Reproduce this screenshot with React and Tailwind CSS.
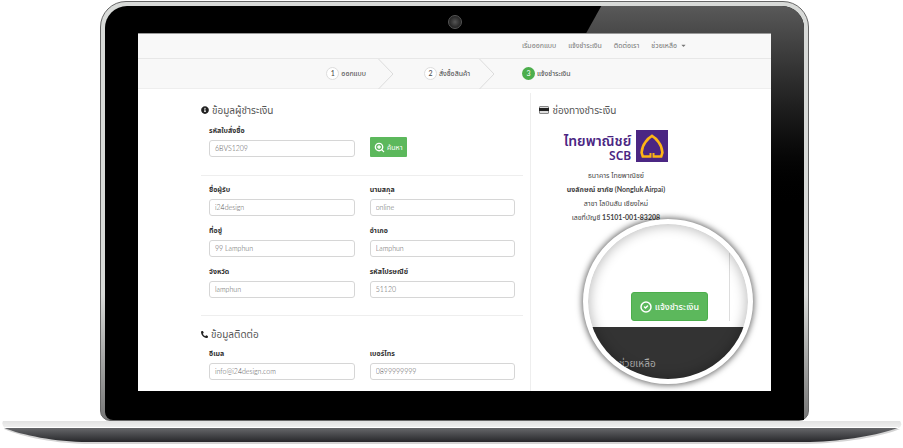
import React, { useState } from "react";
import { FaInfoCircle, FaPhoneAlt, FaCaretDown } from "react-icons/fa";
import { ZoomIn, CircleCheck } from "lucide-react";

const navLinks = ["เริ่มออกแบบ", "แจ้งชำระเงิน", "ติดต่อเรา"];

const Field = ({ id, label, value, onChange }) => (
  <div className="min-w-0">
    <label htmlFor={id} className="block text-[7px] leading-[12px] font-bold text-[#333]">
      {label}
    </label>
    <input
      id={id}
      type="text"
      value={value}
      onChange={(e) => onChange(id, e.target.value)}
      className="mt-[4px] block h-[17px] w-full rounded-[3px] border border-[#d6d6d6] bg-white px-[5px] pb-[1px] text-[7px] font-light text-[#555] outline-none"
    />
  </div>
);

const Step = ({ number, label, active }) => (
  <li className="flex items-center gap-[2px] text-[7px] whitespace-nowrap text-[#444]">
    <span
      className={
        active
          ? "flex h-[13px] w-[13px] items-center justify-center rounded-full bg-[#4cae4c] text-white"
          : "flex h-[13px] w-[13px] items-center justify-center rounded-full border border-[#ddd] bg-white"
      }
    >
      {number}
    </span>
    {label}
  </li>
);

const StepArrow = () => (
  <li aria-hidden="true" className="h-full">
    <svg width="16" height="30" viewBox="0 0 16 30" fill="none" stroke="#dcdcdc">
      <path d="M0.5 0L15 15L0.5 30" />
    </svg>
  </li>
);

const CardIcon = () => (
  <svg width="10" height="8" viewBox="0 0 10 8">
    <rect x="0.5" y="0.5" width="9" height="7" rx="0.5" fill="#ddd" stroke="#888" />
    <rect x="0" y="2" width="10" height="3" fill="#222" />
  </svg>
);

const BankLogo = () => (
  <div className="flex items-start justify-center gap-[5px] text-[#4b2683]">
    <div className="text-right font-['Noto_Sans','Noto_Sans_Thai',sans-serif]">
      <p className="text-[14px] leading-[21px] font-semibold">ไทยพาณิชย์</p>
      <p className="text-[12px] leading-[10px] font-semibold">SCB</p>
    </div>
    <svg width="32" height="32" viewBox="0 0 32 32">
      <rect width="32" height="32" fill="#4b2683" />
      <path
        d="M14.800 23V26.500H6.800L5.600 22.500C6 18 7.500 14.500 9.500 12C11.500 9 13.500 7.200 16 5.800C18.500 7.200 20.500 9 22.500 12C24.500 14.500 26 18 26.400 22.500L25.200 26.500H17.200V23"
        fill="none"
        stroke="#fdb515"
        strokeWidth="2.600"
      />
      <path d="M16 21V30" stroke="#4b2683" />
    </svg>
  </div>
);

const Magnifier = () => (
  <div className="absolute right-[18px] bottom-[7px] flex h-[165px] w-[170px] flex-col overflow-hidden rounded-[50%] border-[5px] border-white bg-white shadow-[0_0_6px_1px_rgba(0,0,0,0.6)]">
    <div className="flex flex-1 items-end justify-end gap-[21px] pr-[18px] pb-[6px]">
      <button
        type="button"
        className="flex h-[29px] w-[77px] items-center justify-center gap-[3px] rounded-[3px] border border-[#4cae4c] bg-[#5cb85c] text-[9px] font-medium whitespace-nowrap text-white"
      >
        <CircleCheck size={12} strokeWidth={3} />
        แจ้งชำระเงิน
      </button>
      <span className="h-[68px] w-px bg-[#ddd]" />
    </div>
    <div className="h-[52px] bg-[#333] pt-[28px] pl-[31px] text-[10px] leading-[16px] text-[#aaa]">ช่วยเหลือ</div>
    <div className="pointer-events-none absolute inset-0 rounded-[50%] shadow-[inset_0_0_12px_2px_rgba(0,0,0,0.25)]" />
  </div>
);

const LaptopBase = () => (
  <svg className="block h-[27px] w-full" viewBox="0 0 903 27" preserveAspectRatio="none">
    <defs>
      <linearGradient id="baseTop" x1="0" y1="0" x2="0" y2="1">
        <stop offset="0" stopColor="#e2e2e2" />
        <stop offset="1" stopColor="#f0f0f0" />
      </linearGradient>
      <linearGradient id="baseBottom" x1="0" y1="0" x2="0" y2="1">
        <stop offset="0" stopColor="#66676a" />
        <stop offset="1" stopColor="#27282b" />
      </linearGradient>
    </defs>
    <path d="M4 8C22 16 56 23 92 23H806C845 22 880 16 900 8Z" fill="#d4d4d4" />
    <path d="M4 7C22 14 55 21 88 21H810C845 20 878 14 898 7Z" fill="url(#baseBottom)" />
    <path d="M3 0H900Q903 4 899 7H5Q1 4 3 0Z" fill="url(#baseTop)" />
    <path d="M5 6.500H898" stroke="#fff" />
  </svg>
);

const PaymentPage = () => {
  const [form, setForm] = useState({
    order: "6BVS1209",
    firstName: "i24design",
    lastName: "online",
    address: "99 Lamphun",
    district: "Lamphun",
    province: "lamphun",
    zip: "51120",
    email: "info@i24design.com",
    phone: "0899999999",
  });

  const handleChange = (id, value) => setForm({ ...form, [id]: value });
  const field = (id, label) => <Field id={id} label={label} value={form[id]} onChange={handleChange} />;

  return (
    <div className="relative overflow-hidden bg-white">
      <nav className="flex h-[25px] items-center justify-end gap-[12px] border-b border-[#e7e7e7] bg-[#f8f8f8] pr-[84px] pb-[2px] text-[7px] text-[#777]">
        {navLinks.map((link) => (
          <a key={link} href="#">
            {link}
          </a>
        ))}
        <button type="button" className="flex items-center gap-[3px]">
          ช่วยเหลือ
          <FaCaretDown size={7} />
        </button>
      </nav>

      <ol className="flex h-[30px] items-center justify-center border-b border-[#eee] bg-[#f8f8f8] pr-[12px]">
        <Step number={1} label="ออกแบบ" />
        <li className="w-[12px]" />
        <StepArrow />
        <li className="w-[30px]" />
        <Step number={2} label="สั่งซื้อสินค้า" />
        <li className="w-[9px]" />
        <StepArrow />
        <li className="w-[27px]" />
        <Step number={3} label="แจ้งชำระเงิน" active />
      </ol>

      <div className="flex pt-[4px]">
        <form className="w-[62%] pr-[7px] pb-[11px] pl-[63px]" onSubmit={(e) => e.preventDefault()}>
          <h2 className="flex h-[31px] items-center gap-[3px] pt-[3px] text-[10px] text-[#555]">
            <FaInfoCircle size={8} className="text-[#222]" />
            ข้อมูลผู้ชำระเงิน
          </h2>
          <div className="grid grid-cols-2 items-end gap-x-[15px] px-[8px]">
            {field("order", "รหัสใบสั่งซื้อ")}
            <button
              type="submit"
              className="flex h-[20px] w-[37px] items-center justify-center gap-[2px] rounded-[1px] bg-[#5cb85c] text-[7px] text-white"
            >
              <ZoomIn size={11} strokeWidth={3} />
              ค้นหา
            </button>
          </div>
          <hr className="mt-[18px] border-[#eee]" />
          <div className="grid grid-cols-2 gap-x-[15px] gap-y-[8px] px-[8px] pt-[7px]">
            {field("firstName", "ชื่อผู้รับ")}
            {field("lastName", "นามสกุล")}
            {field("address", "ที่อยู่")}
            {field("district", "อำเภอ")}
            {field("province", "จังหวัด")}
            {field("zip", "รหัสไปรษณีย์")}
          </div>
          <hr className="mt-[17px] border-[#eee]" />
          <h2 className="flex h-[31px] items-center gap-[3px] pt-[5px] text-[10px] text-[#555]">
            <FaPhoneAlt size={7} className="text-[#222]" />
            ข้อมูลติดต่อ
          </h2>
          <div className="grid grid-cols-2 gap-x-[15px] px-[8px]">
            {field("email", "อีเมล")}
            {field("phone", "เบอร์โทร")}
          </div>
        </form>

        <section className="flex-1 border-l border-[#eee] pl-[8px]">
          <h2 className="flex h-[31px] items-center gap-[3px] pt-[3px] text-[10px] text-[#555]">
            <CardIcon />
            ช่องทางชำระเงิน
          </h2>
          <div className="w-[153px] pt-[6px] text-center text-[7px] leading-[14px] whitespace-nowrap text-[#444]">
            <BankLogo />
            <p className="pt-[6px]">ธนาคาร ไทยพาณิชย์</p>
            <p className="font-bold">นงลักษณ์ ยาภัย (Nongluk Airpai)</p>
            <p>สาขา โลบินสัน เชียงใหม่</p>
            <p>
              เลขที่บัญชี <b>15101-001-83208</b>
            </p>
          </div>
        </section>
      </div>

      <Magnifier />
    </div>
  );
};

export default function App() {
  return (
    <main className="bg-white pt-[1px] font-['Lato','Noto_Sans_Thai',sans-serif]">
      <div className="mr-[94px] ml-[100px]">
        <div className="rounded-t-[26px] rounded-b-[10px] border border-[#666] bg-linear-to-b from-[#d8dad8] from-70% to-[#777] p-[4px] pb-0">
          <div className="relative rounded-t-[22px] rounded-b-[8px] bg-black px-[33px] pb-[29px]">
            <div className="absolute inset-0 rounded-tr-[22px] bg-linear-to-b from-[#595959] to-black to-50% [clip-path:polygon(71%_0,100%_0,100%_100%,38%_100%)]" />
            <div className="relative flex h-[27px] items-center justify-center">
              <span className="mt-[5px] h-[14px] w-[14px] rounded-full border border-[#555] bg-radial from-[#555] to-[#111]" />
            </div>
            <div className="relative border-t border-[#999]">
              <PaymentPage />
            </div>
          </div>
        </div>
      </div>
      <LaptopBase />
    </main>
  );
}
